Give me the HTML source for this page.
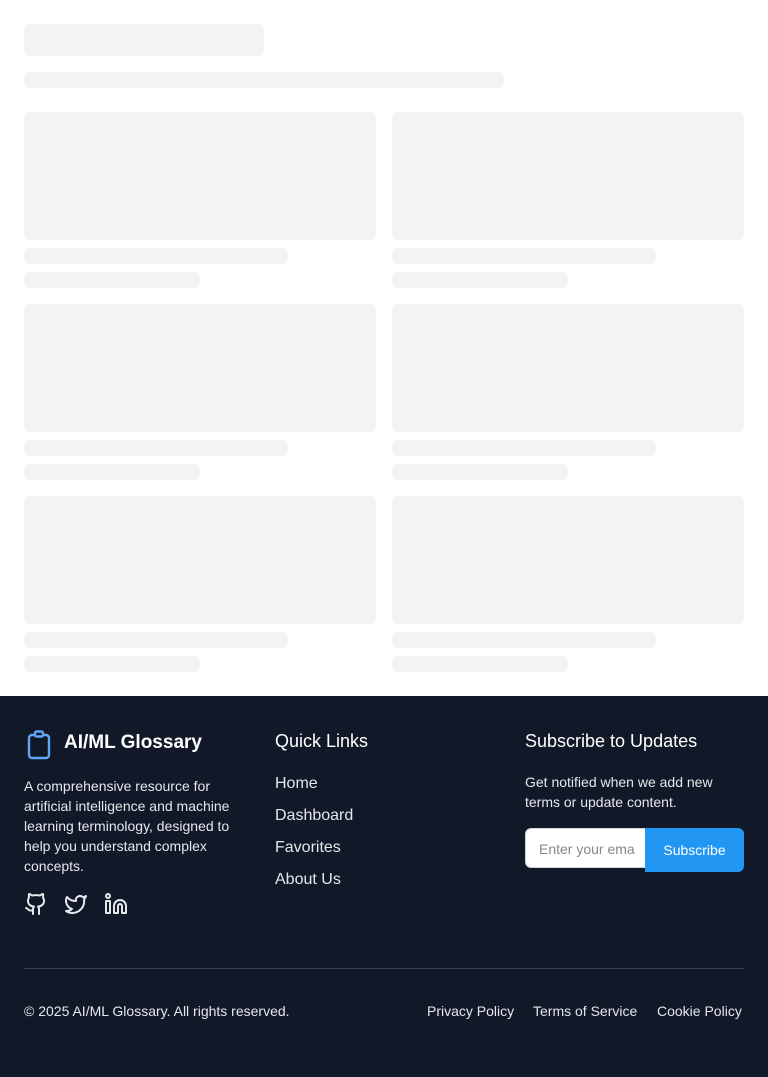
<!DOCTYPE html>
<html><head><meta charset="utf-8"><style>
*{margin:0;padding:0;box-sizing:border-box}
body{width:768px;height:1077px;background:#fff;font-family:"Liberation Sans",sans-serif;position:relative;overflow:hidden}
.s{position:absolute;background:#f3f3f2;border-radius:6px}
footer{position:absolute;left:0;top:696px;width:768px;height:381px;background:#111827;color:#e5e7eb}
.a{position:absolute;white-space:nowrap}
</style></head><body>
<div class="s" style="left:24px;top:24px;width:240px;height:32px;border-radius:6px"></div>
<div class="s" style="left:24px;top:72px;width:480px;height:16px;border-radius:6px"></div>

<div class="s" style="left:24px;top:112px;width:352px;height:128px"></div>
<div class="s" style="left:24px;top:248px;width:264px;height:16px"></div>
<div class="s" style="left:24px;top:272px;width:176px;height:16px"></div>
<div class="s" style="left:392px;top:112px;width:352px;height:128px"></div>
<div class="s" style="left:392px;top:248px;width:264px;height:16px"></div>
<div class="s" style="left:392px;top:272px;width:176px;height:16px"></div>

<div class="s" style="left:24px;top:304px;width:352px;height:128px"></div>
<div class="s" style="left:24px;top:440px;width:264px;height:16px"></div>
<div class="s" style="left:24px;top:464px;width:176px;height:16px"></div>
<div class="s" style="left:392px;top:304px;width:352px;height:128px"></div>
<div class="s" style="left:392px;top:440px;width:264px;height:16px"></div>
<div class="s" style="left:392px;top:464px;width:176px;height:16px"></div>

<div class="s" style="left:24px;top:496px;width:352px;height:128px"></div>
<div class="s" style="left:24px;top:632px;width:264px;height:16px"></div>
<div class="s" style="left:24px;top:656px;width:176px;height:16px"></div>
<div class="s" style="left:392px;top:496px;width:352px;height:128px"></div>
<div class="s" style="left:392px;top:632px;width:264px;height:16px"></div>
<div class="s" style="left:392px;top:656px;width:176px;height:16px"></div>

<footer>
<svg class="a" style="left:26px;top:34px" width="28" height="30" viewBox="0 0 28 30" fill="none" stroke="#60a5fa" stroke-width="2.4" stroke-linejoin="round"><rect x="3" y="5" width="20" height="23" rx="3"/><rect x="9" y="1.5" width="8" height="5" rx="1.5" fill="#111827"/></svg>
<div class="a" style="left:64px;top:36px;font-size:19px;font-weight:bold;color:#fff">AI/ML Glossary</div>
<div class="a" style="left:24px;top:80px;font-size:14px;line-height:20px;color:#e5e7eb;white-space:normal;width:230px">A comprehensive resource for artificial intelligence and machine learning terminology, designed to help you understand complex concepts.</div>
<svg class="a" style="left:24px;top:196px" width="24" height="24" viewBox="0 0 24 24" fill="none" stroke="#e5e7eb" stroke-width="2" stroke-linecap="round" stroke-linejoin="round"><path d="M15 22v-4a4.8 4.8 0 0 0-1-3.5c3 0 6-2 6-5.5.08-1.25-.27-2.48-1-3.5.28-1.15.28-2.35 0-3.5 0 0-1 0-3 1.5-2.64-.5-5.36-.5-8 0C6 2 5 2 5 2c-.3 1.15-.3 2.35 0 3.5A5.4 5.4 0 0 0 4 9c0 3.5 3 5.5 6 5.5-.39.49-.68 1.05-.85 1.65S8.93 17.38 9 18v4"/><path d="M9 18c-4.51 2-5-2-7-2"/></svg>
<svg class="a" style="left:64px;top:196px" width="24" height="24" viewBox="0 0 24 24" fill="none" stroke="#e5e7eb" stroke-width="2" stroke-linecap="round" stroke-linejoin="round"><path d="M22 4s-.7 2.1-2 3.4c1.6 10-9.4 17.3-18 11.6 2.2.1 4.4-.6 6-2C3 15.5.5 9.6 3 5c2.2 2.6 5.6 4.1 9 4-.9-4.2 4-6.6 7-3.8 1.1 0 3-1.2 3-1.2z"/></svg>
<svg class="a" style="left:104px;top:196px" width="24" height="24" viewBox="0 0 24 24" fill="none" stroke="#e5e7eb" stroke-width="2" stroke-linecap="round" stroke-linejoin="round"><path d="M16 8a6 6 0 0 1 6 6v7h-4v-7a2 2 0 0 0-4 0v7h-4v-7a6 6 0 0 1 6-6z"/><rect x="2" y="9" width="4" height="12"/><circle cx="4" cy="4" r="2"/></svg>

<div class="a" style="left:275px;top:35px;font-size:18px;color:#fff">Quick Links</div>
<div class="a" style="left:275px;top:79px;font-size:16px;color:#e5e7eb">Home</div>
<div class="a" style="left:275px;top:111px;font-size:16px;color:#e5e7eb">Dashboard</div>
<div class="a" style="left:275px;top:143px;font-size:16px;color:#e5e7eb">Favorites</div>
<div class="a" style="left:275px;top:175px;font-size:16px;color:#e5e7eb">About Us</div>

<div class="a" style="left:525px;top:35px;font-size:18px;color:#fff">Subscribe to Updates</div>
<div class="a" style="left:525px;top:76px;font-size:14px;line-height:20px;color:#e5e7eb">Get notified when we add new<br>terms or update content.</div>
<div class="a" style="left:525px;top:132px;width:122px;height:40px;background:#fff;border-radius:6px 0 0 6px;border:1px solid #d1d5db;overflow:hidden;font-size:14px;color:#888;padding:12px 0 0 13px">Enter your ema</div>
<div class="a" style="left:645px;top:132px;width:99px;height:44px;background:#2196f3;border-radius:0 6px 6px 0;color:#fff;font-size:14px;text-align:center;padding-top:14px">Subscribe</div>

<div class="a" style="left:24px;top:272px;width:720px;height:1px;background:#374151"></div>
<div class="a" style="left:24px;top:307px;font-size:14px;color:#e5e7eb">© 2025 AI/ML Glossary. All rights reserved.</div>
<div class="a" style="left:427px;top:307px;font-size:14px;color:#e5e7eb">Privacy Policy</div>
<div class="a" style="left:533px;top:307px;font-size:14px;color:#e5e7eb">Terms of Service</div>
<div class="a" style="left:657px;top:307px;font-size:14px;color:#e5e7eb">Cookie Policy</div>
</footer>
</body></html>
